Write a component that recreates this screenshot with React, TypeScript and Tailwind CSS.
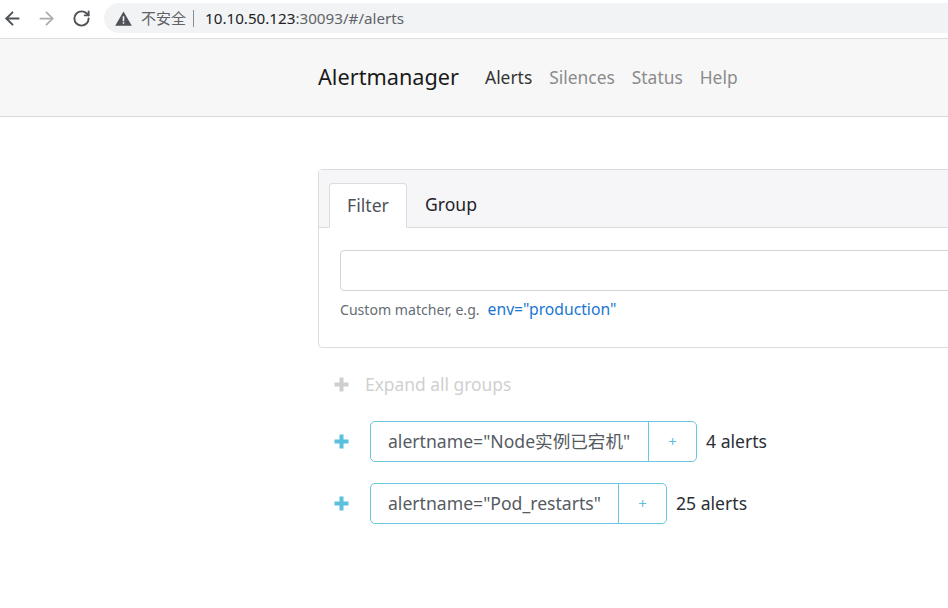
import { ArrowLeft, ArrowRight, RotateCw } from "lucide-react"

const font = "font-['Noto_Sans','Noto_Sans_CJK_SC',sans-serif]"

function PlusIcon({ className }: { className: string }) {
  return (
    <svg width="15" height="15" viewBox="0 0 15 15" className={className}>
      <path d="M5.5 0.5h4v5h5v4h-5v5h-4v-5h-5v-4h5z" fill="currentColor" />
    </svg>
  )
}

function AlertGroup({ label, count, labelWidth }: { label: string; count: string; labelWidth: string }) {
  return (
    <div className="flex items-center h-[41px]">
      <PlusIcon className="text-[#5bc0de] w-[15px] ml-[16px] mr-[21px] shrink-0" />
      <div className="flex h-[41px] rounded-[5px] border border-[#6cc6e0] text-[17.6px] text-[#555b62]">
        <span className={`${labelWidth} pl-[17px] flex items-center whitespace-nowrap`}>{label}</span>
        <span className="w-[48px] border-l border-[#6cc6e0] flex items-center justify-center text-[#5bc0de] text-[15px]">+</span>
      </div>
      <span className="ml-[9px] text-[17.6px] text-[#2a2f35] whitespace-nowrap">{count}</span>
    </div>
  )
}

export default function App() {
  return (
    <div className={`${font} w-[948px] h-[608px] overflow-hidden bg-white`}>
      {/* browser toolbar */}
      <div className="h-[39px] flex items-center pb-[2px] border-b border-[#dedede]">
        <ArrowLeft size={21} strokeWidth={2.2} className="ml-[2px] text-[#4f5357]" />
        <ArrowRight size={21} strokeWidth={2} className="ml-[13px] text-[#a9abae]" />
        <RotateCw size={19} strokeWidth={2.4} className="ml-[15px] text-[#4f5357]" />
        <div className="ml-[13px] flex-1 h-[30px] rounded-l-full bg-[#f1f3f4] flex items-center">
          <svg width="17" height="15" viewBox="0 0 17 15" className="ml-[11px] shrink-0">
            <path d="M8.5 0.5 16.8 14.8H0.2z" fill="#4f5357" />
            <path d="M7.7 5.2h1.6v5H7.7zM7.7 11.2h1.6v1.6H7.7z" fill="#f1f3f4" />
          </svg>
          <span className="ml-[9px] text-[15px] text-[#5f6368]">不安全</span>
          <span className="ml-[7px] h-[17px] border-l border-[#8a8d91]" />
          <span className="ml-[11px] text-[15.2px] text-[#202124]">
            10.10.50.123<span className="text-[#5f6368]">:30093/#/alerts</span>
          </span>
        </div>
      </div>

      {/* navbar */}
      <nav className="h-[78px] bg-[#f7f7f7] border-b border-[#d9d9d9] flex items-center pl-[318px]">
        <span className="text-[21.7px] text-[#1b1b1b] mr-[26px]">Alertmanager</span>
        <div className="flex gap-[17px] text-[17.4px] text-[#8b8b8b]">
          <span className="text-[#333]">Alerts</span>
          <span>Silences</span>
          <span>Status</span>
          <span>Help</span>
        </div>
      </nav>

      <main className="pl-[318px] pt-[52px] w-[1100px]">
        {/* filter card */}
        <div className="w-[760px] h-[179px] rounded-[4px] border border-[#dcdcdc]">
          <div className="h-[58px] bg-[#f6f6f8] border-b border-[#dcdcdc] flex items-end pl-[10px]">
            <span className="w-[78px] h-[45px] -mb-px bg-white border border-[#dcdcdc] border-b-white rounded-t-[4px] flex items-center justify-center text-[17.6px] text-[#4d5359]">
              Filter
            </span>
            <span className="ml-[18px] h-[45px] flex items-center text-[17.6px] text-[#1f2328]">Group</span>
          </div>
          <div className="pl-[21px] pt-[22px]">
            <div className="h-[41px] rounded-[4px] border border-[#d4d4d4] bg-white" />
            <div className="mt-[7px] flex items-baseline whitespace-nowrap">
              <span className="text-[14.1px] text-[#666d75]">Custom matcher, e.g.</span>
              <span className="ml-[8px] text-[15.7px] text-[#1976d2]">env="production"</span>
            </div>
          </div>
        </div>

        {/* alert groups */}
        <div className="mt-[23px] h-[26px] flex items-center">
          <PlusIcon className="text-[#cfcfcf] w-[15px] ml-[16px] mr-[16px] shrink-0" />
          <span className="text-[17.4px] text-[#d0d0d0]">Expand all groups</span>
        </div>
        <div className="mt-[24px] flex flex-col gap-[21px]">
          <AlertGroup label={'alertname="Node实例已宕机"'} count="4 alerts" labelWidth="w-[277px]" />
          <AlertGroup label={'alertname="Pod_restarts"'} count="25 alerts" labelWidth="w-[247px]" />
        </div>
      </main>
    </div>
  )
}
